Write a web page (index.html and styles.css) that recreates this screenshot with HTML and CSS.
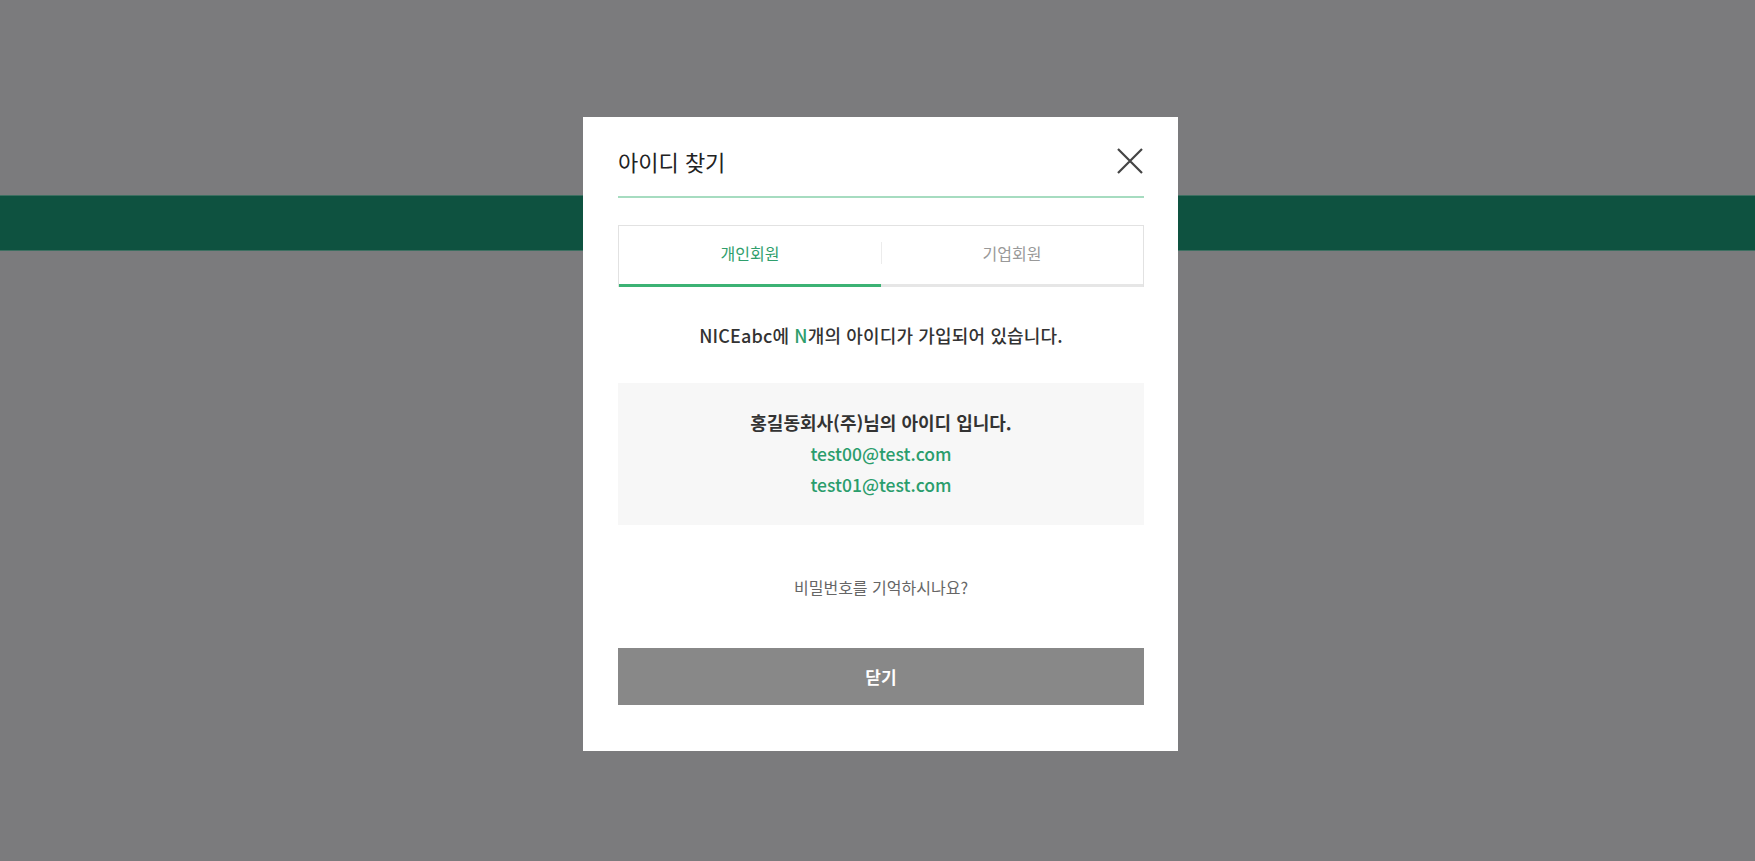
FILE: index.html
```html
<!DOCTYPE html>
<html lang="ko">
<head>
	<meta charset="UTF-8">
	<title>아이디 찾기</title>
	<link rel="stylesheet" href="styles.css">
</head>
<body>
	<div class="band"></div>

	<div class="dim">
		<section class="modal">
			<header class="modal-head">
				<h2>아이디 찾기</h2>
				<button class="btn-close" type="button" aria-label="닫기">
					<svg width="26" height="26" viewBox="0 0 26 26">
						<path d="M1 1 L25 25 M25 1 L1 25" stroke="#444" stroke-width="2.2" fill="none"/>
					</svg>
				</button>
			</header>

			<ul class="tabs">
				<li class="on">개인회원</li>
				<li>기업회원</li>
			</ul>

			<p class="msg">NICEabc에 <em>N</em>개의 아이디가 가입되어 있습니다.</p>

			<div class="result">
				<strong>홍길동회사(주)님의 아이디 입니다.</strong>
				<span>test00@test.com</span>
				<span>test01@test.com</span>
			</div>

			<p class="hint">비밀번호를 기억하시나요?</p>

			<button class="btn-ok" type="button">닫기</button>
		</section>
	</div>
</body>
</html>
```

FILE: styles.css
```css
* {
	box-sizing: border-box;
}
html, body {
	height: 100%;
}
body {
	margin: 0;
	background-color: #7b7b7d;
	font-family: "Noto Sans CJK KR", "Noto Sans", sans-serif;
	overflow: hidden;
}

/* page behind */
.band {
	margin-top: 195px;
	height: 56px;
	background-color: #0e5240;
	border-top: 1px solid #3d6f61;
	border-bottom: 1px solid #3d6f61;
}

/* dim + modal */
.dim {
	position: fixed;
	top: 0; left: 0; right: 0; bottom: 0;
	display: flex;
	justify-content: center;
	align-items: flex-start;
	padding: 117px 0 0 6px;
}
.modal {
	width: 595px;
	background-color: #fff;
	padding: 0 34px 46px 35px;
}

.modal-head {
	display: flex;
	align-items: center;
	justify-content: space-between;
	height: 81px;
	padding: 24px 0 15px;
	border-bottom: 2px solid #a6dcc0;
}
.modal-head h2 {
	margin: 0;
	font-size: 22px;
	font-weight: 400;
	color: #222;
}
.btn-close {
	width: 26px;
	height: 26px;
	margin-right: 1px;
	padding: 0;
	border: none;
	background: none;
	cursor: pointer;
}
.btn-close svg {
	display: block;
}

/* tabs */
.tabs {
	display: flex;
	list-style: none;
	margin: 27px 0 0;
	padding: 0;
	border: 1px solid #e2e2e2;
	border-bottom: none;
}
.tabs li {
	position: relative;
	flex: 1;
	height: 61px;
	padding-bottom: 4px;
	line-height: 54px;
	text-align: center;
	font-size: 16px;
	color: #999;
	border-bottom: 3px solid #e6e6e6;
}
.tabs li + li::before {
	content: "";
	position: absolute;
	top: 16px; left: 0;
	width: 1px;
	height: 22px;
	background-color: #ececec;
}
.tabs li.on {
	color: #2f9e6c;
	border-bottom-color: #3cb274;
}

/* result */
.msg {
	margin: 35px 0 0;
	font-size: 18px;
	font-weight: 500;
	line-height: 27px;
	letter-spacing: 0.15px;
	text-align: center;
	color: #333;
}
.msg em {
	font-style: normal;
	color: #2f9e6c;
}
.result {
	display: flex;
	flex-direction: column;
	align-items: center;
	margin-top: 34px;
	padding: 24px 0 25px;
	background-color: #f7f7f7;
	line-height: 31px;
}
.result strong {
	font-size: 18px;
	color: #333;
}
.result span {
	font-size: 17.5px;
	font-weight: 500;
	color: #2a9d6c;
}

.hint {
	margin: 50px 0 0;
	font-size: 16px;
	line-height: 24px;
	text-align: center;
	color: #666;
}

.btn-ok {
	display: block;
	width: 100%;
	height: 57px;
	margin-top: 49px;
	border: none;
	background-color: #888;
	font-family: inherit;
	font-size: 17px;
	font-weight: 700;
	color: #fff;
	cursor: pointer;
}
```
